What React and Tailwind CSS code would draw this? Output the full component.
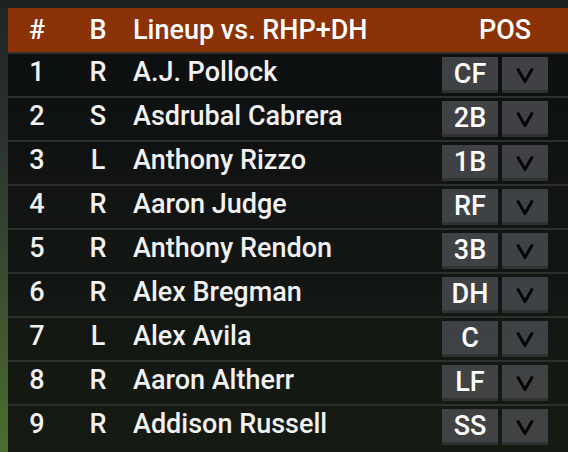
import React from "react";

const rows = [
  ["1", "R", "A.J. Pollock", "CF"],
  ["2", "S", "Asdrubal Cabrera", "2B"],
  ["3", "L", "Anthony Rizzo", "1B"],
  ["4", "R", "Aaron Judge", "RF"],
  ["5", "R", "Anthony Rendon", "3B"],
  ["6", "R", "Alex Bregman", "DH"],
  ["7", "L", "Alex Avila", "C"],
  ["8", "R", "Aaron Altherr", "LF"],
  ["9", "R", "Addison Russell", "SS"],
];

function Chevron() {
  return (
    <svg width="18" height="16" viewBox="0 0 18 16" className="block">
      <polyline points="1.5,1.5 9,14.5 16.5,1.5" fill="none" stroke="#050505" strokeWidth="3" strokeLinejoin="miter" />
    </svg>
  );
}

export default function App() {
  return (
    <div
      className="w-[568px] h-[452px] overflow-hidden flex flex-col bg-[linear-gradient(180deg,#1f2424_0%,#2c3230_30%,#3d5430_70%,#4d6d2e_100%)]"
      style={{ fontFamily: "Roboto, 'Noto Sans', sans-serif" }}
    >
      <div className="h-[8px] shrink-0 bg-[#1c2121]" />
      <div className="flex flex-1 min-h-0">
        <div className="w-[8px] shrink-0" />
        <div className="flex-1 flex flex-col bg-[linear-gradient(180deg,#0c0e0f_0%,#111413_40%,#151a12_100%)]">
          <div className="h-[44px] shrink-0 bg-[#8a3106] flex items-center text-white font-medium text-[27px] leading-none pt-[1px]">
            <div className="w-[58px] text-center">#</div>
            <div className="w-[64px] text-center">B</div>
            <div className="pl-[3px] flex-1">Lineup vs. RHP+DH</div>
            <div className="w-[120px] text-center pr-[6px]">POS</div>
          </div>
          {rows.map(([n, b, name, pos]) => (
            <div
              key={n}
              className="h-[44px] shrink-0 border-t-2 border-[#2d302d] flex items-center text-[#f1f1f1] font-medium text-[27px] leading-none"
            >
              <div className="w-[58px] text-center -mt-[5px]">{n}</div>
              <div className="w-[64px] text-center -mt-[5px]">{b}</div>
              <div className="pl-[3px] flex-1 -mt-[5px]">{name}</div>
              <div className="flex gap-[4px] mr-[20px]">
                <div className="w-[56px] h-[36px] bg-[#45474a]/90 border-b-[3px] border-[#303232] flex items-center justify-center text-white pt-[1px]">
                  {pos}
                </div>
                <div className="w-[46px] h-[36px] bg-[#45474a]/90 border-b-[3px] border-[#303232] flex items-center justify-center pt-[2px]">
                  <Chevron />
                </div>
              </div>
            </div>
          ))}
        </div>
      </div>
    </div>
  );
}
